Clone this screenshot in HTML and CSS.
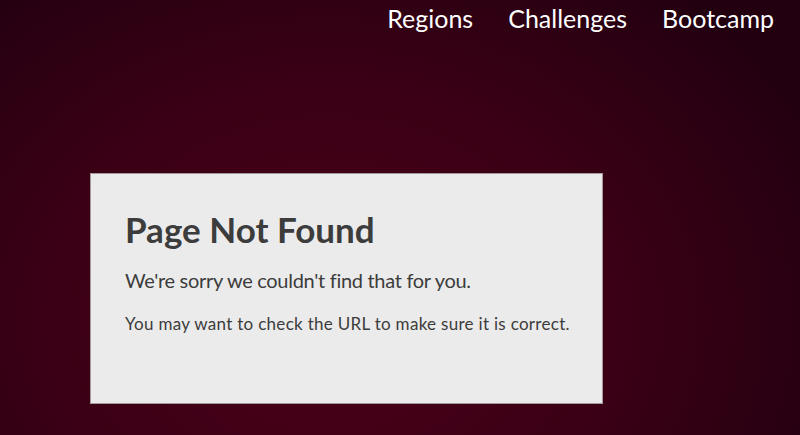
FILE: index.html
```html
<!DOCTYPE html>
<html lang="en">
<head>
<meta charset="utf-8">
<title>Page Not Found</title>
<link rel="stylesheet" href="styles.css">
</head>
<body>
<header class="topbar">
  <nav class="nav">
    <a class="nav-link" href="#">Regions</a>
    <a class="nav-link" href="#">Challenges</a>
    <a class="nav-link" href="#">Bootcamp</a>
  </nav>
</header>
<main class="main">
  <section class="card">
    <h1 class="card-title">Page Not Found</h1>
    <p class="card-lead">We're sorry we couldn't find that for you.</p>
    <p class="card-note">You may want to check the URL to make sure it is correct.</p>
  </section>
</main>
</body>
</html>
```

FILE: styles.css
```css
html, body {
  margin: 0;
  padding: 0;
}
body {
  width: 800px;
  height: 435px;
  overflow: hidden;
  font-family: Lato, "Liberation Sans", sans-serif;
  background: radial-gradient(ellipse 540px 440px at 330px 320px, #4a0019 0%, #3a0015 55%, #220010 100%);
  background-color: #2a0012;
}
.topbar {
  display: flex;
  justify-content: flex-end;
  padding: 3px 26px 0 0;
  height: 173px;
  box-sizing: border-box;
}
.nav {
  display: flex;
  gap: 35px;
}
.nav-link {
  color: #ffffff;
  text-decoration: none;
  font-size: 25px;
  line-height: 30px;
}
.main {
  padding-left: 90px;
}
.card {
  width: 513px;
  height: 231px;
  box-sizing: border-box;
  background: #ebebeb;
  border: 1px solid #a39a9c;
  padding: 34px 20px 0 34px;
  color: #3c3c3c;
}
.card-title {
  margin: 0;
  font-size: 35px;
  line-height: 42px;
  font-weight: 700;
}
.card-lead {
  margin: 17px 0 0;
  font-size: 20px;
  line-height: 26px;
  letter-spacing: -0.3px;
}
.card-note {
  margin: 20px 0 0;
  font-size: 17px;
  line-height: 22px;
  letter-spacing: 0.3px;
  white-space: nowrap;
}
```
